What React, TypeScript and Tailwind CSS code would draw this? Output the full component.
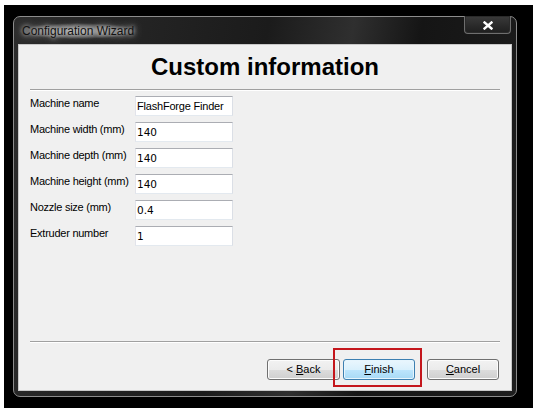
import React from "react";

const fields = [
  { label: "Machine name", value: "FlashForge Finder", sans: true },
  { label: "Machine width (mm)", value: "140" },
  { label: "Machine depth (mm)", value: "140" },
  { label: "Machine height (mm)", value: "140" },
  { label: "Nozzle size (mm)", value: "0.4" },
  { label: "Extruder number", value: "1" },
];

function WizardButton({
  children,
  primary,
  width,
}: {
  children: React.ReactNode;
  primary?: boolean;
  width: string;
}) {
  return (
    <button
      className={`${width} block h-[21px] rounded-[3px] border text-[11px] leading-none text-black ${
        primary
          ? "border-[#3c7fb1] bg-[linear-gradient(#eaf6fd_0%,#d9f0fc_50%,#bee6fd_50%,#a7d9f5_100%)] shadow-[inset_0_0_0_1px_#e6f5fd]"
          : "border-[#707070] bg-[linear-gradient(#f2f2f2_0%,#ebebeb_50%,#dddddd_50%,#cfcfcf_100%)] shadow-[inset_0_0_0_1px_#fcfcfc]"
      }`}
    >
      {children}
    </button>
  );
}

export default function App() {
  return (
    <div className="h-[414px] w-[537px] bg-white pl-[4px] pt-[5px] font-['Liberation_Sans',Arial,sans-serif]">
      <div className="h-[403px] w-[529px] bg-black pl-[9px] pt-[11px]">
        {/* window frame */}
        <div className="flex h-[381px] w-[504px] flex-col rounded-[7px] border border-[#8c8c8c] bg-[linear-gradient(100deg,#2c2c2c_0%,#1b1b1b_45%,#2f2f2f_60%,#151515_72%,#1e1e1e_100%)] px-[5px] pb-[6px]">
          <div className="flex h-[28px] items-start justify-between">
            <span className="mt-[6px] rounded-[10px] bg-[radial-gradient(closest-side,rgba(200,200,200,0.75),rgba(160,160,160,0.35)_75%,rgba(120,120,120,0))] px-[3px] py-[1px] text-[12px] leading-[14px] text-[#111] [text-shadow:0_0_4px_#e0e0e0,0_0_8px_#c0c0c0]">
              Configuration Wizard
            </span>
            <div className="-mt-px flex h-[18px] w-[47px] items-center justify-center rounded-b-[4px] border border-t-0 border-[#6e6e6e] bg-[linear-gradient(#3a3a3a,#1e1e1e)] shadow-[inset_0_0_0_1px_#2a2a2a]">
              <svg width="10" height="9" viewBox="0 0 10 9" className="mt-[1px]">
                <path d="M1.5 1.5 L8.5 7.5 M8.5 1.5 L1.5 7.5" stroke="#ffffff" strokeWidth="2.4" strokeLinecap="square" />
              </svg>
            </div>
          </div>

          {/* client area */}
          <div className="flex h-[345px] w-[492px] flex-col bg-[#f0f0f0] px-[11px] shadow-[0_0_0_1px_#c8c8c8]">
            <div className="flex h-[44px] items-center justify-center">
              <h1 className="text-[24px] font-bold leading-[28px] text-black">Custom information</h1>
            </div>
            <div className="h-px bg-[#a0a0a0]" />
            <div className="h-px bg-white" />

            <div className="mt-[5px] flex flex-col gap-[6px]">
              {fields.map((f) => (
                <div key={f.label} className="flex h-[20px] items-start">
                  <span className="w-[105px] pt-[1px] text-[11px] leading-[13px] tracking-[-0.25px] text-black">
                    {f.label}
                  </span>
                  <div className="flex h-[20px] w-[98px] items-center border border-[#abadb3] border-b-[#e3e9ef] border-l-[#e2e3ea] border-r-[#dbdfe6] bg-white pl-[1px] pt-[1px]">
                    <span
                      className={`leading-none text-black ${
                        f.sans ? "text-[11px] tracking-[-0.2px]" : "font-['DejaVu_Sans',sans-serif] text-[10.5px]"
                      }`}
                    >
                      {f.value}
                    </span>
                  </div>
                </div>
              ))}
            </div>

            <div className="flex-1" />
            <div className="h-px bg-[#a0a0a0]" />
            <div className="h-px bg-white" />

            <div className="mb-[10px] mt-[16px] flex items-start justify-end pr-px">
              <WizardButton width="w-[73px]">
                &lt; <span className="underline">B</span>ack
              </WizardButton>
              <div className="relative ml-[3px]">
                <WizardButton width="w-[72px]" primary>
                  <span className="underline">F</span>inish
                </WizardButton>
                <div className="pointer-events-none absolute -bottom-[7px] -left-[10px] -right-[7px] -top-[11px] border-2 border-[#c4161c]" />
              </div>
              <div className="ml-[12px]">
                <WizardButton width="w-[72px]">
                  <span className="underline">C</span>ancel
                </WizardButton>
              </div>
            </div>
          </div>
        </div>
      </div>
    </div>
  );
}
